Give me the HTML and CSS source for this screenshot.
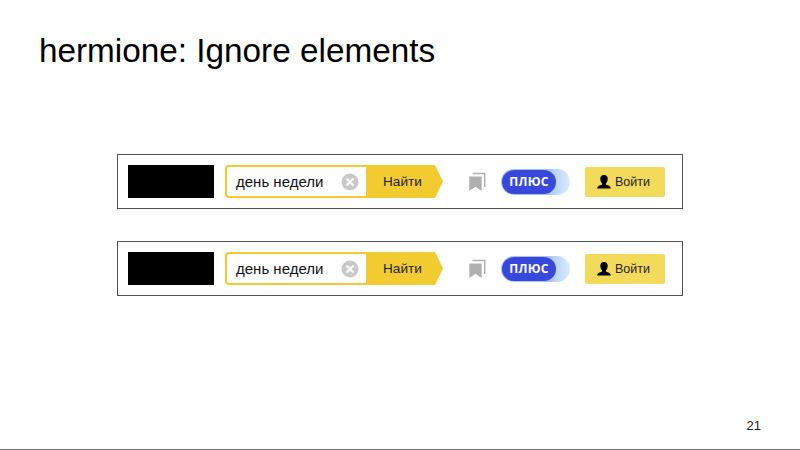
FILE: index.html
```html
<!DOCTYPE html>
<html lang="ru">

<head>
    <meta charset="UTF-8">
    <meta name="viewport" content="width=device-width, initial-scale=1.0">
    <title>hermione: Ignore elements</title>
    <link rel="stylesheet" href="styles.css">
</head>

<body>
    <div class="slide">
        <h1 class="title">hermione: Ignore elements</h1>

        <div class="shots">
            <div class="bar">
                <div class="ignored"></div>
                <div class="search">
                    <div class="field">
                        <span class="query">день недели</span>
                        <svg class="clear" viewBox="0 0 18 18">
                            <circle cx="9" cy="9" r="8.5" fill="#c9c9c9" />
                            <path d="M5.500 5.500l7 7M12.500 5.500l-7 7" stroke="#fff" stroke-width="2" />
                        </svg>
                    </div>
                    <div class="find">Найти</div>
                </div>
                <svg class="bookmark" viewBox="0 0 17 19">
                    <path d="M.3 4.500h12.400V19l-6.200-4.300L.3 19z" fill="#b0b0b0" />
                    <path d="M3.500 1.500h12.200V15" fill="none" stroke="#b0b0b0" stroke-width="1.500" />
                </svg>
                <div class="plus"><span class="pill">ПЛЮС</span></div>
                <div class="login">
                    <svg class="user" viewBox="0 0 14 14">
                        <path d="M7 0c2.500 0 3.700 1.400 3.700 3.900 0 1.900-.7 3.500-1.700 4.400v1.200c.4.800 4.700.9 4.900 3.900H.1c.2-3 4.500-3.100 4.900-3.900V8.300C4 7.400 3.300 5.800 3.300 3.900 3.300 1.400 4.500 0 7 0z" />
                    </svg>
                    <span>Войти</span>
                </div>
            </div>

            <div class="bar">
                <div class="ignored"></div>
                <div class="search">
                    <div class="field">
                        <span class="query">день недели</span>
                        <svg class="clear" viewBox="0 0 18 18">
                            <circle cx="9" cy="9" r="8.5" fill="#c9c9c9" />
                            <path d="M5.500 5.500l7 7M12.500 5.500l-7 7" stroke="#fff" stroke-width="2" />
                        </svg>
                    </div>
                    <div class="find">Найти</div>
                </div>
                <svg class="bookmark" viewBox="0 0 17 19">
                    <path d="M.3 4.500h12.400V19l-6.200-4.300L.3 19z" fill="#b0b0b0" />
                    <path d="M3.500 1.500h12.200V15" fill="none" stroke="#b0b0b0" stroke-width="1.500" />
                </svg>
                <div class="plus"><span class="pill">ПЛЮС</span></div>
                <div class="login">
                    <svg class="user" viewBox="0 0 14 14">
                        <path d="M7 0c2.500 0 3.700 1.400 3.700 3.900 0 1.900-.7 3.500-1.700 4.400v1.200c.4.800 4.700.9 4.900 3.900H.1c.2-3 4.500-3.100 4.900-3.900V8.300C4 7.400 3.300 5.800 3.300 3.900 3.300 1.400 4.500 0 7 0z" />
                    </svg>
                    <span>Войти</span>
                </div>
            </div>
        </div>

        <div class="page">21</div>
    </div>
</body>

</html>
```

FILE: styles.css
```css
* {
    margin: 0;
    padding: 0;
    box-sizing: border-box;
}

body {
    background-color: #fefefe;
    color: #000;
    font-family: "Liberation Sans", Arial, sans-serif;
}

.slide {
    display: flex;
    flex-direction: column;
    height: 450px;
    border-bottom: 1px solid #777;
    overflow: hidden;
}

.title {
    padding: 32px 0 0 39px;
    font-size: 33.3px;
    font-weight: normal;
    line-height: 38px;
    white-space: nowrap;
}

.shots {
    display: flex;
    flex-direction: column;
    gap: 32px;
    margin: 84px 0 0 117px;
}

.bar {
    display: flex;
    align-items: center;
    width: 566px;
    height: 55px;
    padding-left: 10px;
    border: 1px solid #505050;
    background-color: #fff;
}

.ignored {
    width: 86px;
    height: 33px;
    background-color: #000;
}

.search {
    display: flex;
    width: 218px;
    height: 33px;
    margin-left: 11px;
}

.field {
    display: flex;
    align-items: center;
    justify-content: space-between;
    width: 141px;
    padding: 0 7px 0 9px;
    border: 2px solid #f2cb30;
    border-right: 0;
    border-radius: 4px 0 0 4px;
}

.query {
    color: #111;
    font-size: 15px;
    white-space: nowrap;
}

.clear {
    width: 18px;
    height: 18px;
}

.find {
    width: 77px;
    padding-left: 17px;
    background-color: #f2cb30;
    clip-path: polygon(0 0, 69px 0, 100% 50%, 69px 100%, 0 100%);
    color: #222;
    font-size: 13.6px;
    line-height: 33px;
}

.bookmark {
    width: 17px;
    height: 19px;
    margin-left: 26px;
}

.plus {
    width: 69px;
    height: 26px;
    margin-left: 15px;
    padding: 1px;
    border-radius: 13px;
    background: linear-gradient(90deg, #a9c3f5 70%, #bad7fb 80%, #dcebff);
}

.pill {
    display: block;
    width: 54px;
    height: 24px;
    border-radius: 12px;
    background-color: #3848dc;
    color: #fff;
    font-family: "Open Sans", "Noto Sans", sans-serif;
    font-size: 12px;
    font-weight: bold;
    letter-spacing: .3px;
    line-height: 24px;
    text-align: center;
}

.login {
    display: flex;
    align-items: center;
    gap: 4px;
    width: 80px;
    height: 30px;
    margin-left: 15px;
    padding-left: 12px;
    border-radius: 2px;
    background-color: #f4da5a;
    color: #222;
    font-size: 12.5px;
}

.user {
    width: 14px;
    height: 14px;
}

.page {
    margin: auto 39px 15px auto;
    color: #222;
    font-size: 13px;
    line-height: 16px;
}
```
